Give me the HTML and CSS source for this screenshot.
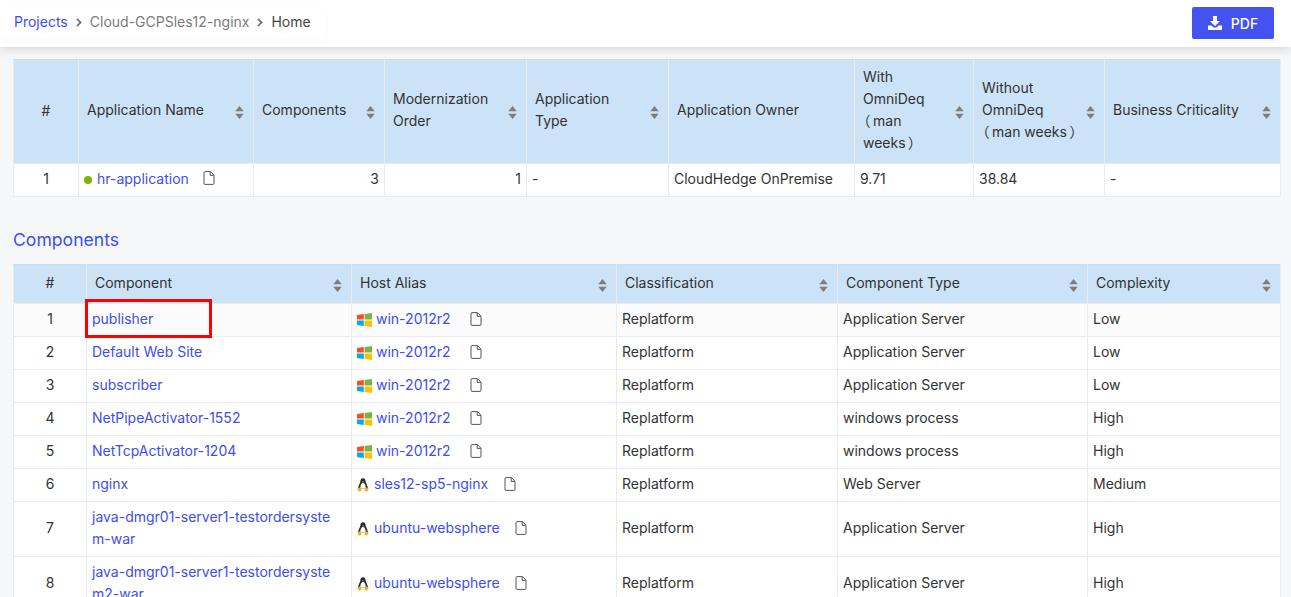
FILE: index.html
```html
<!DOCTYPE html>
<html lang="en">
<head>
<meta charset="utf-8">
<title>Home</title>
<link rel="stylesheet" href="styles.css">
</head>
<body>
<svg class="defs" width="0" height="0" aria-hidden="true">
  <defs>
    <symbol id="sort" viewBox="0 0 9 13"><path d="M4.500 0 8.700 5.200H.3Z M.3 7.800H8.700L4.500 13Z" fill="#7d7d7d"/></symbol>
    <symbol id="doc" viewBox="0 0 12 14"><path d="M1 1.600C1 1 1.400.6 2 .6H7.400L11 4.200V12.400C11 13 10.600 13.400 10 13.400H2C1.400 13.400 1 13 1 12.400Z M7.200.8V4.400H10.800" fill="none" stroke="#555" stroke-width="1"/></symbol>
    <symbol id="win" viewBox="0 0 15 14"><path d="M0 2 6.800 1V6.600H0Z" fill="#f4511e"/><path d="M7.600.9 15 0V6.600H7.600Z" fill="#7cb342"/><path d="M0 7.400H6.800V13L0 12Z" fill="#03a9f4"/><path d="M7.600 7.400H15V14L7.600 13.100Z" fill="#ffc107"/></symbol>
    <symbol id="tux" viewBox="0 0 12 14"><path d="M6 .2C8 .2 8.600 1.800 8.600 3.400 8.600 5 11 7.500 11 11H1C1 7.500 3.400 5 3.400 3.400 3.400 1.800 4 .2 6 .2Z" fill="#2a2a2a"/><path d="M6 4.800C7.600 4.800 9 8 8.700 10.800H3.300C3 8 4.400 4.800 6 4.800Z" fill="#fff"/><path d="M.2 10.800 3 9.200 4.800 12.800 2 13.800Z M11.800 10.800 9 9.200 7.200 12.800 10 13.800Z M5 3.400H7L6 4.700Z" fill="#f5b31b"/></symbol>
    <symbol id="download" viewBox="0 0 14 14"><path d="M5 0H9V5H12L7 10 2 5H5Z M0 9.500H3.500L5.500 11.500H8.500L10.500 9.500H14V14H0Z" fill="#fff"/></symbol>
  </defs>
</svg>
<header class="topbar">
  <nav class="crumbs">
    <a class="link" href="#">Projects</a><span class="sep"></span>
    <span class="crumb-mid">Cloud-GCPSles12-nginx</span><span class="sep"></span>
    <span class="crumb-end">Home</span>
  </nav>
  <button class="pdf" type="button"><svg class="ico-dl"><use href="#download"/></svg>PDF</button>
</header>
<main class="content">
  <table class="grid apps">
    <colgroup><col class="a1"><col class="a2"><col class="a3"><col class="a4"><col class="a5"><col class="a6"><col class="a7"><col class="a8"><col class="a9"></colgroup>
    <thead>
      <tr>
        <th class="center">#</th>
        <th><div class="th"><span>Application Name</span><svg class="sort"><use href="#sort"/></svg></div></th>
        <th><div class="th"><span>Components</span><svg class="sort"><use href="#sort"/></svg></div></th>
        <th><div class="th"><span>Modernization<br>Order</span><svg class="sort"><use href="#sort"/></svg></div></th>
        <th><div class="th"><span>Application<br>Type</span><svg class="sort"><use href="#sort"/></svg></div></th>
        <th><div class="th"><span>Application Owner</span></div></th>
        <th><div class="th"><span>With<br>OmniDeq<br><i class="po">（</i>man<br>weeks<i class="pc">）</i></span><svg class="sort"><use href="#sort"/></svg></div></th>
        <th><div class="th"><span>Without<br>OmniDeq<br><i class="po">（</i>man weeks<i class="pc">）</i></span><svg class="sort"><use href="#sort"/></svg></div></th>
        <th><div class="th"><span>Business Criticality</span><svg class="sort"><use href="#sort"/></svg></div></th>
      </tr>
    </thead>
    <tbody>
      <tr>
        <td class="center">1</td>
        <td><span class="dot"></span><a class="link" href="#">hr-application</a><svg class="doc doc-app"><use href="#doc"/></svg></td>
        <td class="right">3</td>
        <td class="right">1</td>
        <td>-</td>
        <td>CloudHedge OnPremise</td>
        <td>9.71</td>
        <td>38.84</td>
        <td>-</td>
      </tr>
    </tbody>
  </table>

  <h2 class="section">Components</h2>

  <table class="grid comps">
    <colgroup><col class="c1"><col class="c2"><col class="c3"><col class="c4"><col class="c5"><col class="c6"></colgroup>
    <thead>
      <tr>
        <th class="center">#</th>
        <th><div class="th"><span>Component</span><svg class="sort"><use href="#sort"/></svg></div></th>
        <th><div class="th"><span>Host Alias</span><svg class="sort"><use href="#sort"/></svg></div></th>
        <th><div class="th"><span>Classification</span><svg class="sort"><use href="#sort"/></svg></div></th>
        <th><div class="th"><span>Component Type</span><svg class="sort"><use href="#sort"/></svg></div></th>
        <th><div class="th"><span>Complexity</span><svg class="sort"><use href="#sort"/></svg></div></th>
      </tr>
    </thead>
    <tbody>
      <tr class="alt">
        <td class="center">1</td>
        <td class="marked"><a class="link" href="#">publisher</a><span class="redbox"></span></td>
        <td><svg class="os win"><use href="#win"/></svg><a class="link" href="#">win-2012r2</a><svg class="doc doc-win"><use href="#doc"/></svg></td>
        <td>Replatform</td><td>Application Server</td><td>Low</td>
      </tr>
      <tr>
        <td class="center">2</td>
        <td><a class="link" href="#">Default Web Site</a></td>
        <td><svg class="os win"><use href="#win"/></svg><a class="link" href="#">win-2012r2</a><svg class="doc doc-win"><use href="#doc"/></svg></td>
        <td>Replatform</td><td>Application Server</td><td>Low</td>
      </tr>
      <tr>
        <td class="center">3</td>
        <td><a class="link" href="#">subscriber</a></td>
        <td><svg class="os win"><use href="#win"/></svg><a class="link" href="#">win-2012r2</a><svg class="doc doc-win"><use href="#doc"/></svg></td>
        <td>Replatform</td><td>Application Server</td><td>Low</td>
      </tr>
      <tr>
        <td class="center">4</td>
        <td><a class="link" href="#">NetPipeActivator-1552</a></td>
        <td><svg class="os win"><use href="#win"/></svg><a class="link" href="#">win-2012r2</a><svg class="doc doc-win"><use href="#doc"/></svg></td>
        <td>Replatform</td><td>windows process</td><td>High</td>
      </tr>
      <tr>
        <td class="center">5</td>
        <td><a class="link" href="#">NetTcpActivator-1204</a></td>
        <td><svg class="os win"><use href="#win"/></svg><a class="link" href="#">win-2012r2</a><svg class="doc doc-win"><use href="#doc"/></svg></td>
        <td>Replatform</td><td>windows process</td><td>High</td>
      </tr>
      <tr>
        <td class="center">6</td>
        <td><a class="link" href="#">nginx</a></td>
        <td><svg class="os tux"><use href="#tux"/></svg><a class="link" href="#">sles12-sp5-nginx</a><svg class="doc doc-sles"><use href="#doc"/></svg></td>
        <td>Replatform</td><td>Web Server</td><td>Medium</td>
      </tr>
      <tr>
        <td class="center">7</td>
        <td><a class="link" href="#">java-dmgr01-server1-testordersyste<br>m-war</a></td>
        <td><svg class="os tux"><use href="#tux"/></svg><a class="link" href="#">ubuntu-websphere</a><svg class="doc doc-ubu"><use href="#doc"/></svg></td>
        <td>Replatform</td><td>Application Server</td><td>High</td>
      </tr>
      <tr>
        <td class="center">8</td>
        <td><a class="link" href="#">java-dmgr01-server1-testordersyste<br>m2-war</a></td>
        <td><svg class="os tux"><use href="#tux"/></svg><a class="link" href="#">ubuntu-websphere</a><svg class="doc doc-ubu"><use href="#doc"/></svg></td>
        <td>Replatform</td><td>Application Server</td><td>High</td>
      </tr>
    </tbody>
  </table>
</main>
</body>
</html>
```
FILE: styles.css
```css
html, body { margin: 0; padding: 0; height: 597px; overflow: hidden; }
body {
  background: #f6f7f9;
  color: #333;
  font-family: "Inter", "Noto Sans", "Noto Sans CJK SC", "Liberation Sans", sans-serif;
  font-size: 14px;
  line-height: 22px;
}
.defs { position: absolute; }
.link { color: #3d4df0; text-decoration: none; }

.topbar {
  height: 47px;
  box-sizing: border-box;
  background: #fff;
  box-shadow: 0 2px 10px rgba(0,0,0,.14);
  display: flex;
  align-items: flex-start;
  justify-content: space-between;
  padding: 7px 17px 0 0;
  position: relative;
}
.crumbs {
  width: 326px;
  height: 32px;
  box-sizing: border-box;
  padding: 0 0 2px 14px;
  display: flex;
  align-items: center;
  border-radius: 3px;
  box-shadow: 0 1px 4px rgba(0,0,0,.03);
  font-size: 14px;
}
.crumb-mid { color: #7b7b7b; }
.crumb-end { color: #444; }
.sep {
  width: 5px; height: 5px;
  border-top: 2px solid #777; border-right: 2px solid #777;
  transform: rotate(45deg) scale(.85);
  margin: 0 9px 0 6px;
}
.pdf {
  width: 82px; height: 32px;
  background: #4452f2;
  border: 0; border-radius: 2px;
  color: #fff;
  font: 500 14px "Inter", "Noto Sans", sans-serif;
  display: flex; align-items: center; justify-content: center;
  padding: 0;
}
.ico-dl { width: 14px; height: 14px; margin-right: 9px; }

.content { padding: 12px 11px 0 13px; }

.grid {
  table-layout: fixed;
  border-collapse: collapse;
  background: #fff;
  width: 1267px;
}
.grid th, .grid td {
  border: 1px solid #e9ecef;
  font-weight: 400;
  text-align: left;
  vertical-align: middle;
}
.grid th {
  background: #cbe2f7;
  padding: 0 8px;
  border-top-color: #c9dff2;
  color: #333;
}
.grid td { padding: 4px 8px 6px 5px; color: #333; }
.grid .center { text-align: center; padding: 0 0 2px; }
.grid .right { text-align: right; padding-right: 5px; }
.th { display: flex; align-items: center; justify-content: space-between; font-feature-settings: "palt"; }
.po, .pc { font-style: normal; }
.po { margin-right: 3px; }
.pc { margin-left: 3px; }
.sort { width: 9px; height: 13px; flex: none; margin-right: 1px; }
.apps thead tr { height: 104px; }
.comps thead tr { height: 39px; }
.apps .th span { padding-bottom: 4px; }
.apps .sort { margin-top: 1px; }
.comps .th span { padding-bottom: 3px; }
.comps .sort { margin-top: 2px; }
.alt td { background: #fbfbfb; }

.a1 { width: 65px; } .a2 { width: 175px; } .a3 { width: 131px; }
.a4 { width: 142px; } .a5 { width: 142px; } .a6 { width: 186px; }
.a7 { width: 119px; } .a8 { width: 131px; } .a9 { width: 176px; }
.c1 { width: 73px; } .c2 { width: 265px; } .c3 { width: 265px; }
.c4 { width: 221px; } .c5 { width: 250px; } .c6 { width: 193px; }

.dot {
  display: inline-block; width: 8px; height: 8px;
  border-radius: 50%; background: #7cb305;
  margin-right: 5px;
}
.doc { width: 12px; height: 14px; vertical-align: -2px; }
.doc-app { margin-left: 14px; vertical-align: -1px; }
.doc-win { margin-left: 19px; }
.doc-sles { margin-left: 16px; }
.doc-ubu { margin-left: 15px; }
.os { height: 14px; vertical-align: -3px; }
.os.win { width: 15px; margin-right: 4px; }
.os.tux { width: 12px; margin-right: 5px; }

.section {
  color: #3d4df0;
  font-size: 17.6px;
  font-weight: 400;
  line-height: 24px;
  margin: 31px 0 12px;
}
.marked { position: relative; }
.redbox {
  position: absolute;
  left: -2px; top: -5px;
  width: 121px; height: 33px;
  border: 3px solid #f00;
}
```
